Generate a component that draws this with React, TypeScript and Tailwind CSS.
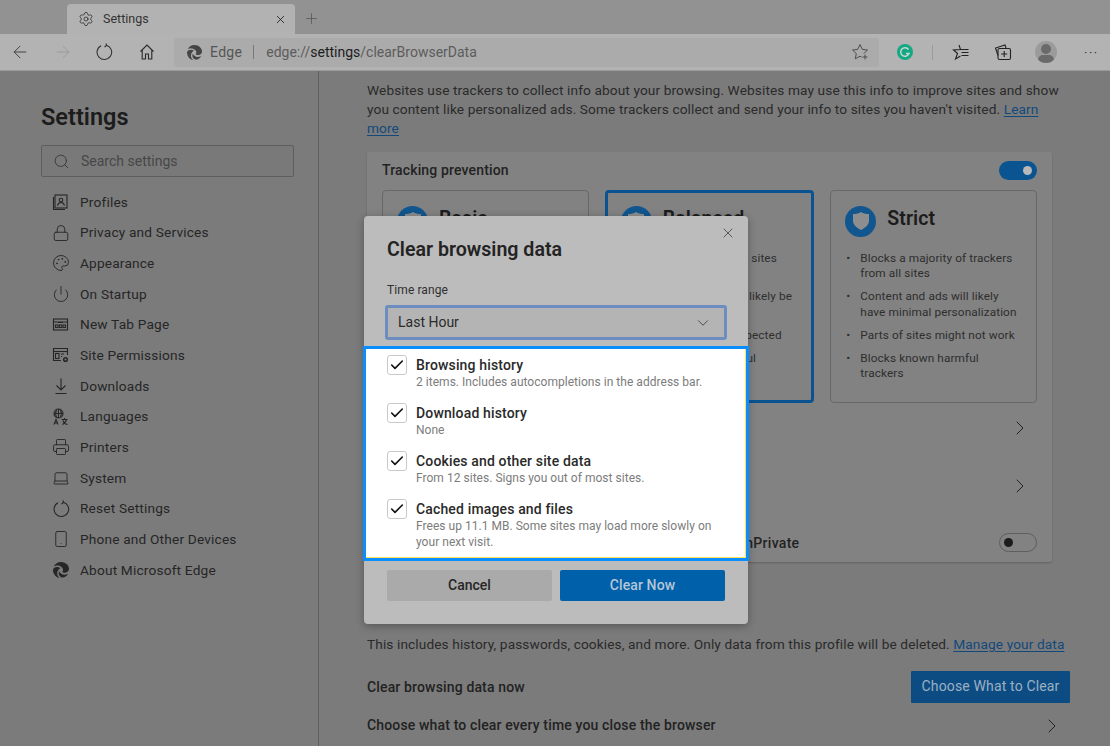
import React from "react";
import { Settings as Gear, X, Plus, ArrowLeft, ArrowRight, Search, Lock, Palette, Power, Printer, Laptop, Smartphone, ChevronDown, ChevronRight, Check } from "lucide-react";
import { FaEdge } from "react-icons/fa6";

const S = (p: { children: React.ReactNode; size?: number; className?: string }) => (
  <svg width={p.size ?? 18} height={p.size ?? 18} viewBox="0 0 18 18" fill="none" stroke="currentColor" strokeWidth="1.1" className={p.className}>
    {p.children}
  </svg>
);

const Nav: [React.ReactNode, string][] = [
  [<S><rect x="3" y="2" width="12" height="13" /><path d="M1.5 4v12.5H13" /><circle cx="9" cy="7" r="1.8" /><path d="M5.5 12.5c.5-2 2-3 3.500-3s3 1 3.500 3" /></S>, "Profiles"],
  [<Lock size={18} strokeWidth={1.2} />, "Privacy and Services"],
  [<Palette size={18} strokeWidth={1.2} />, "Appearance"],
  [<Power size={18} strokeWidth={1.2} />, "On Startup"],
  [<S><rect x="1.500" y="3" width="14" height="11" /><path d="M1.500 6h14M6 6.500h5" /><rect x="3.500" y="9" width="2.500" height="2.500" /><rect x="7.300" y="9" width="2.500" height="2.500" /><rect x="11" y="9" width="2.500" height="2.500" /></S>, "New Tab Page"],
  [<S><path d="M9 14.500H1.500V2.500h14V9" /><path d="M1.500 5.500h14" /><rect x="3.500" y="7.500" width="3.500" height="5" /><path d="M9 8h3M9 10.500h1" /><circle cx="13.500" cy="13.500" r="1.800" strokeWidth="1.500" /></S>, "Site Permissions"],
  [<S><path d="M9 1.500v11M4.500 8.500 9 13l4.500-4.500M3.500 16.500h11" /></S>, "Downloads"],
  [<S><circle cx="6.500" cy="5.500" r="4.500" /><path d="M2 5.500h9M6.500 1v9M4.500 2c-1 2-1 5 0 7M8.500 2c1 2 1 5 0 7" /><path d="M2 16.500 4 11.500l2 5M2.800 15h2.400M9.500 11.500h6M12.500 10v2M10.500 16.500c2-1 3.500-2.500 4-5M11 12.500c.5 2 2.500 3.500 4.500 4" /></S>, "Languages"],
  [<Printer size={18} strokeWidth={1.2} />, "Printers"],
  [<Laptop size={18} strokeWidth={1.2} />, "System"],
  [<S><path d="M6 2.700A7.300 7.300 0 1 0 11.500 2.200" /><path d="M11 .5 11.500 2.500 9.500 4" /></S>, "Reset Settings"],
  [<Smartphone size={18} strokeWidth={1.2} />, "Phone and Other Devices"],
  [<FaEdge size={16} />, "About Microsoft Edge"],
];

function Plan({ name, active, items }: { name: string; active?: boolean; items: string[] }) {
  return (
    <div className={`flex-1 h-[213px] rounded-[4px] ${active ? "border-[3px] border-[#0b5390] pl-[13px] pt-[13px]" : "border border-[#686868] pl-[14px] pt-[15px]"}`}>
      <div className="flex items-center gap-[11px] h-[31px]">
        <div className="w-[31px] h-[31px] rounded-full bg-[#11568f] flex items-center justify-center">
          <svg width="16" height="18" viewBox="0 0 16 18"><path d="M8 0c2 1.500 5 2 8 2v7c0 4-4 7-8 9-4-2-8-5-8-9V2c3 0 6-.5 8-2z" fill="#8e8e8e" /></svg>
        </div>
        <div className="text-[19.5px] leading-[28px] font-semibold text-[#1c1c1c] -mt-[5px]">{name}</div>
      </div>
      <ul className={`mt-[14px] text-[11.8px] leading-[15.500px] text-[#2e2e2e] ${active ? "ml-[2px] pr-[15px]" : "pr-[17px]"}`}>
        {items.map((t) => (
          <li key={t} className="flex mb-[7.500px]">
            <span className="w-[15px] pl-[1px] shrink-0">•</span>
            <span>{t}</span>
          </li>
        ))}
      </ul>
    </div>
  );
}

function Option({ title, sub }: { title: string; sub: React.ReactNode }) {
  return (
    <div className="flex gap-[9px] h-[48px]">
      <div className="w-[20px] h-[20px] rounded-[3px] border border-[#c9c9c9] flex items-center justify-center shrink-0">
        <Check size={16} strokeWidth={2.4} className="text-[#111]" />
      </div>
      <div>
        <div className="text-[14px] leading-[20px] tracking-[0.15px] font-medium text-[#2a2a2a]">{title}</div>
        <div className="-mt-[1px] text-[12px] leading-[16px] tracking-[0.03px] text-[#7c7c7c]">{sub}</div>
      </div>
    </div>
  );
}

const rowLabel = "font-medium text-[14px] tracking-[0.15px] text-[#222]";

export default function App() {
  return (
    <div className="relative w-[1110px] h-[746px] overflow-hidden flex flex-col bg-[#7b7b7b] font-['Roboto',sans-serif] text-[#2a2a2a]">
      {/* tab strip */}
      <div className="h-[34px] bg-[#929292] pl-[67px] pt-[4px] flex items-start shrink-0">
        <div className="w-[228px] h-[30px] bg-[#b2b2b2] rounded-t-[4px] flex items-center pl-[11px] pr-[8px]">
          <Gear size={16} strokeWidth={1.2} className="text-[#2f2f2f]" />
          <span className="ml-[9px] text-[12.5px] text-[#333]">Settings</span>
          <X size={13} strokeWidth={1.6} className="ml-auto text-[#222]" />
        </div>
        <Plus size={17} strokeWidth={1} className="ml-[8px] mt-[6px] text-[#505050]" />
      </div>
      {/* toolbar */}
      <div className="h-[37px] bg-[#b3b3b3] border-b border-[#9a9a9a] flex items-center shrink-0 relative">
        <ArrowLeft size={20} strokeWidth={1.1} className="ml-[10px] text-[#3a3a3a]" />
        <ArrowRight size={20} strokeWidth={1.1} className="ml-[23px] text-[#999]" />
        <svg width="18" height="18" viewBox="0 0 18 18" fill="none" stroke="#333" strokeWidth="1.100" className="ml-[22px]">
          <path d="M6 2.700A7.300 7.300 0 1 0 11.500 2.200" /><path d="M11 .5 11.500 2.500 9.500 4" />
        </svg>
        <svg width="18" height="18" viewBox="0 0 18 18" fill="none" stroke="#2a2a2a" strokeWidth="1.100" className="ml-[25px]">
          <path d="M2.500 8.500 9 2l6.500 6.500M4.200 7v9H7.500v-5h3v5h3.300V7" />
        </svg>
        <div className="ml-[18px] w-[705px] h-[29px] bg-[#ababab] rounded-[3px] flex items-center pl-[13px] pr-[10px]">
          <FaEdge size={15} className="text-[#454545]" />
          <span className="ml-[8px] mt-[1px] text-[14px] text-[#555] tracking-[0.3px]">Edge</span>
          <span className="ml-[11px] w-px h-[14px] bg-[#777]" />
          <span className="ml-[12px] mt-[1px] text-[14px] text-[#5c5c5c]">
            edge://<span className="text-[#1d1d1d]">settings</span>/clearBrowserData
          </span>
          <svg width="18" height="18" viewBox="0 0 18 18" fill="none" stroke="#4d4d4d" strokeWidth="1" className="ml-auto">
            <path d="M9 1.500l2.300 4.900 5.200.6-3.800 3.600 1 5.200L9 13.200l-4.700 2.600 1-5.200L1.500 7l5.200-.6z" />
            <circle cx="14" cy="14" r="3.500" fill="#ababab" stroke="none" />
            <path d="M11.500 14h5M14 11.500v5" />
          </svg>
        </div>
        <svg width="16" height="16" viewBox="0 0 16 16" className="ml-[18px]">
          <circle cx="8" cy="8" r="8" fill="#15a884" />
          <path d="M11.500 5.500A4.300 4.300 0 1 0 12 9.500H9" fill="none" stroke="#c4d8d0" strokeWidth="1.500" />
        </svg>
        <span className="ml-[19px] w-px h-[15px] bg-[#9c9c9c]" />
        <svg width="18" height="18" viewBox="0 0 18 18" fill="none" stroke="#222" strokeWidth="1.100" className="ml-[19px]">
          <path d="M7 2 8.500 6.500 1.500 7l4 3.500-2 5.500 5-3" /><path d="M8.500 6.500h8M9.500 9.500h7M9.500 12.500h7" />
        </svg>
        <svg width="18" height="18" viewBox="0 0 18 18" fill="none" stroke="#222" strokeWidth="1.100" className="ml-[24px]">
          <path d="M4 12.500 1.500 5 11 2l1 3" /><rect x="4" y="5.500" width="12.500" height="11" rx="1.500" /><path d="M10.200 8v6M7.200 11h6" />
        </svg>
        <div className="ml-[23px] w-[22px] h-[22px] rounded-full bg-[#9b9b9b] relative overflow-hidden shrink-0">
          <div className="absolute left-[6px] top-[3px] w-[10px] h-[10px] rounded-full bg-[#6a6a6a]" />
          <div className="absolute left-[3px] top-[14px] w-[16px] h-[10px] rounded-full bg-[#6a6a6a]" />
        </div>
        <div className="ml-[27px] text-[#333] text-[13px] tracking-[1.500px] leading-none">···</div>
      </div>

      <div className="flex flex-1 min-h-0">
        {/* sidebar */}
        <aside className="w-[319px] shrink-0 border-r border-[#5f5f5f] pl-[41px] pt-[30px]">
          <h1 className="text-[23.500px] leading-[32px] font-semibold text-[#1c1c1c]">Settings</h1>
          <div className="mt-[12px] w-[253px] h-[32px] border border-[#5e5e5e] rounded-[2px] bg-[#797979] flex items-center pl-[11px]">
            <Search size={17} strokeWidth={1.2} className="text-[#333]" />
            <span className="ml-[11px] text-[14px] text-[#474747]">Search settings</span>
          </div>
          <nav className="mt-[9.700px] ml-[11px]">
            {Nav.map(([ic, label]) => (
              <div key={label} className="h-[30.670px] flex items-center text-[#262626]">
                <span className="w-[18px] flex justify-center">{ic}</span>
                <span className="ml-[10px] text-[13.700px] tracking-[0.17px]">{label}</span>
              </div>
            ))}
          </nav>
        </aside>

        {/* main */}
        <main className="flex-1 pl-[48px] pr-[40px] pt-[9.500px] text-[13.700px] tracking-[0.1px] leading-[19px]">
          <p>
            Websites use trackers to collect info about your browsing. Websites may use this info to improve sites and show you content like personalized ads. Some trackers collect and send your info to sites you haven't visited.{" "}
            <span className="text-[#12497c] underline underline-offset-2">Learn more</span>
          </p>
          <section className="mt-[14px] w-[685px] h-[410px] bg-[#828282] rounded-[2px] px-[15px] shadow-[0_1px_2px_rgba(0,0,0,0.2)]">
            <div className="h-[38px] flex items-center justify-between">
              <span className={rowLabel}>Tracking prevention</span>
              <span className="w-[38px] h-[19px] rounded-full bg-[#0a5492] flex items-center justify-end pr-[5px]">
                <span className="w-[9px] h-[9px] rounded-full bg-[#b8b8b8]" />
              </span>
            </div>
            <div className="flex gap-[16px]">
              <Plan name="Basic" items={[]} />
              <Plan name="Balanced" active items={["Blocks trackers from sites you haven't visited", "Content and ads will likely be less personalized", "Sites will work as expected", "Blocks known harmful trackers"]} />
              <Plan name="Strict" items={["Blocks a majority of trackers from all sites", "Content and ads will likely have minimal personalization", "Parts of sites might not work", "Blocks known harmful trackers"]} />
            </div>
            <div className="mt-[15px] h-[20px] flex justify-end pr-[5px]"><ChevronRight size={24} strokeWidth={1} className="-mt-[2px] text-[#222]" /></div>
            <div className="mt-[38px] h-[20px] flex justify-end pr-[5px]"><ChevronRight size={24} strokeWidth={1} className="-mt-[2px] text-[#222]" /></div>
            <div className="mt-[37px] h-[20px] flex justify-between items-center">
              <span className="font-medium text-[14px] tracking-[0.31px] text-[#222] mt-[1px]">Always use "Strict" tracking prevention when browsing InPrivate</span>
              <span className="w-[38px] h-[19px] rounded-full border border-[#5e5e5e] flex items-center pl-[4px]">
                <span className="w-[9px] h-[9px] rounded-full bg-[#1c1c1c]" />
              </span>
            </div>
          </section>
          <p className="mt-[73px]">
            This includes history, passwords, cookies, and more. Only data from this profile will be deleted.{" "}
            <span className="text-[#12497c] underline underline-offset-2">Manage your data</span>
          </p>
          <div className="mt-[17px] flex items-center justify-between">
            <span className={`${rowLabel} mt-[1px]`}>Clear browsing data now</span>
            <span className="w-[159px] h-[32px] bg-[#0c4c83] rounded-[1px] flex items-center justify-center text-[14px] tracking-[0.15px] text-[#9db0c2]">Choose What to Clear</span>
          </div>
          <div className="mt-[13px] h-[20px] flex items-center justify-between">
            <span className={rowLabel}>Choose what to clear every time you close the browser</span>
            <ChevronRight size={24} strokeWidth={1} className="text-[#222] mr-[6px]" />
          </div>
        </main>
      </div>

      {/* dialog */}
      <div className="absolute left-[364px] top-[216px] w-[384px] h-[408px] bg-[#bcbcbc] rounded-[4px] px-[23px] pt-[20px] shadow-[0_2px_8px_rgba(0,0,0,0.3)]">
        <X size={16} strokeWidth={1.1} className="absolute right-[12px] top-[9px] text-[#333]" />
        <h2 className="text-[19.600px] leading-[28px] font-semibold text-[#232323]">Clear browsing data</h2>
        <div className="mt-[18px] text-[12px] leading-[16px] tracking-[0.1px] text-[#303030]">Time range</div>
        <div className="mt-[7px] -mx-[2px] h-[35px] bg-[#b4b4b4] border-[3px] border-[#6d8cc0] rounded-[3px] flex items-center pl-[10px] pr-[12px]">
          <span className="text-[14px] text-[#2a2a2a]">Last Hour</span>
          <ChevronDown size={18} strokeWidth={1} className="ml-auto text-[#2a2a2a]" />
        </div>
        <div className="mt-[6px] -mx-[24px] h-[215px] border-[3px] border-[#0a8dff] bg-white">
          <div className="h-full border-r border-b border-[#ffe45c] pl-[21px] pt-[6px]">
            <Option title="Browsing history" sub="2 items. Includes autocompletions in the address bar." />
            <Option title="Download history" sub="None" />
            <Option title="Cookies and other site data" sub="From 12 sites. Signs you out of most sites." />
            <Option title="Cached images and files" sub={<>Frees up 11.1 MB. Some sites may load more slowly on<br />your next visit.</>} />
          </div>
        </div>
        <div className="mt-[9px] flex gap-[8px]">
          <div className="flex-1 h-[31px] bg-[#aaaaaa] rounded-[2px] flex items-center justify-center text-[14px] font-medium text-[#262626]">Cancel</div>
          <div className="flex-1 h-[31px] bg-[#0060a9] rounded-[2px] flex items-center justify-center text-[14px] tracking-[0.1px] font-medium text-[#b6c6d6]">Clear Now</div>
        </div>
      </div>
    </div>
  );
}
